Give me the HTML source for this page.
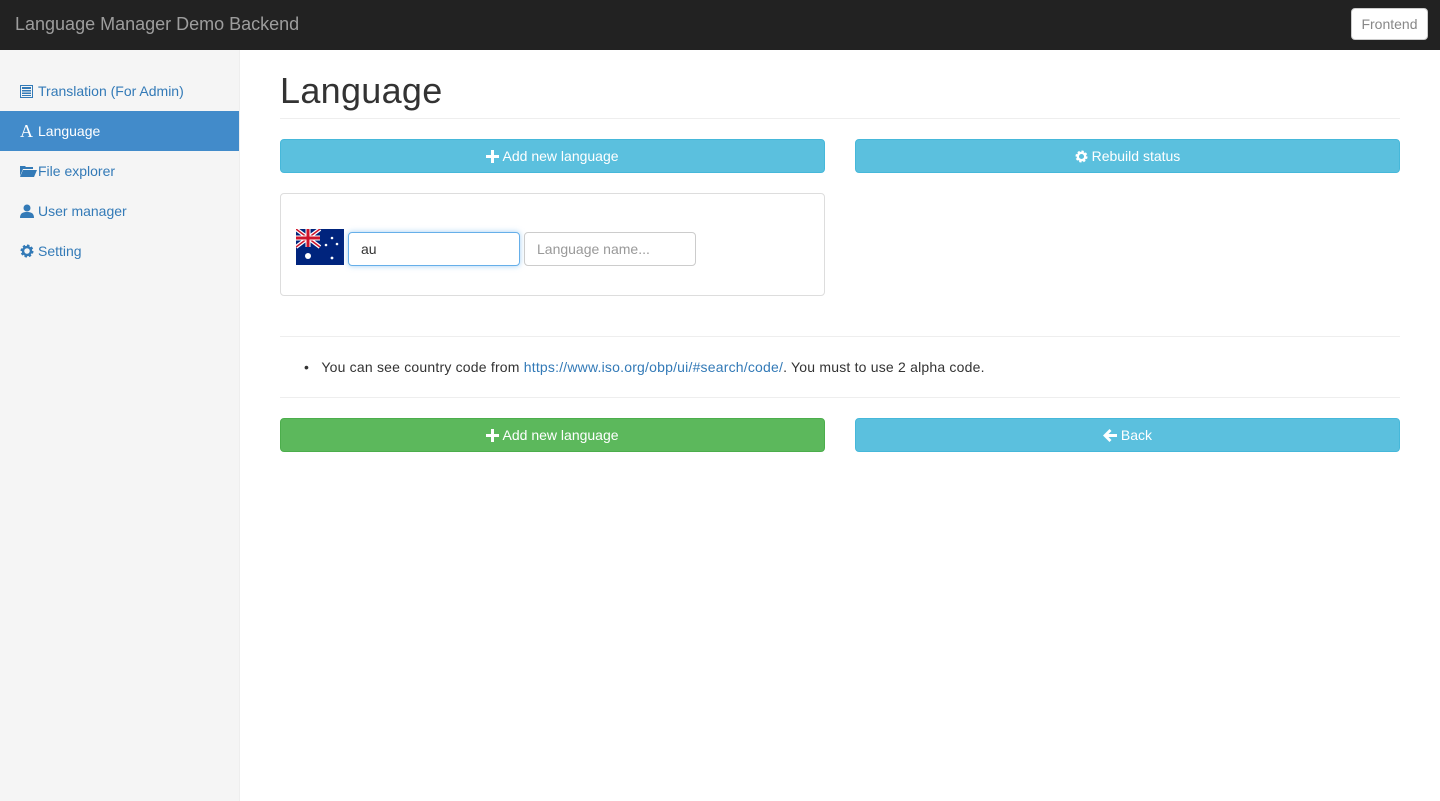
<!DOCTYPE html>
<html><head><style>
*{box-sizing:border-box;margin:0;padding:0}
body{width:1440px;height:801px;font-family:"Liberation Sans",sans-serif;font-size:14px;color:#333;background:#fff;position:relative;overflow:hidden}
.nav{position:absolute;left:0;top:0;width:1440px;height:50px;background:#222;}
.brand{position:absolute;left:15px;top:14px;font-size:18px;color:#9d9d9d}
.fe{position:absolute;right:12px;top:8px;width:77px;height:32px;background:#fff;border:1px solid #ccc;border-radius:4px;color:#888;font-size:14px;text-align:center;line-height:30px}
.side{position:absolute;left:0;top:50px;width:240px;height:751px;background:#f5f5f5;border-right:1px solid #eee}
.si{position:absolute;left:0;width:239px;height:40px;line-height:40px;padding-left:20px;color:#337ab7;font-size:14px}
.si.act{background:#428bca;color:#fff}
.ic{display:inline-block;width:18px;vertical-align:top}
.ic svg{vertical-align:-2px}
h1{position:absolute;left:280px;top:70px;font-size:36px;font-weight:500;color:#333;letter-spacing:0.3px}
.hr{position:absolute;left:280px;width:1120px;height:1px;background:#eee}
.btn{position:absolute;height:34px;border-radius:4px;color:#fff;text-align:center;line-height:33px;font-size:14px;background:#5bc0de;border:1px solid #46b8da}
.btn svg{vertical-align:-2px}
.green{background:#5cb85c;border-color:#4cae4c}
.panel{position:absolute;left:280px;top:193px;width:545px;height:103px;border:1px solid #ddd;border-radius:4px}
.inp{position:absolute;top:232px;height:34px;border:1px solid #ccc;border-radius:4px;padding-left:12px;line-height:32px;font-size:14px}
a{color:#337ab7;text-decoration:none}
</style></head><body>
<div class="nav"><div class="brand">Language Manager Demo Backend</div><div class="fe">Frontend</div></div>
<div class="side">
<div class="si" style="top:21px"><span class="ic"><svg width="13" height="13" viewBox="0 0 13 13"><rect x="0.5" y="0.5" width="12" height="12" fill="none" stroke="#337ab7"/><rect x="2" y="2" width="9" height="2" fill="#337ab7"/><rect x="2" y="5" width="9" height="1.5" fill="#337ab7"/><rect x="2" y="7.5" width="9" height="1.5" fill="#337ab7"/><rect x="2" y="10" width="9" height="1" fill="#337ab7"/></svg></span>Translation (For Admin)</div>
<div class="si act" style="top:61px"><span class="ic" style="font-family:'Liberation Serif',serif;font-size:18px">A</span>Language</div>
<div class="si" style="top:101px"><span class="ic"><svg width="17" height="13" viewBox="0 0 17 13"><path d="M0 1h5l1 1h7v2H3L0 11z" fill="#337ab7"/><path d="M3 5h14l-3 7H0z" fill="#337ab7"/></svg></span>File explorer</div>
<div class="si" style="top:141px"><span class="ic"><svg width="14" height="14" viewBox="0 0 14 14"><circle cx="7" cy="4" r="3.5" fill="#337ab7"/><path d="M0 14c0-5 3-6 7-6s7 1 7 6z" fill="#337ab7"/></svg></span>User manager</div>
<div class="si" style="top:181px"><span class="ic"><svg width="14" height="14" viewBox="0 0 14 14"><circle cx="7" cy="7" r="5" fill="none" stroke="#337ab7" stroke-width="3" stroke-dasharray="2.2 1.7"/><circle cx="7" cy="7" r="4" fill="none" stroke="#337ab7" stroke-width="2.5"/><circle cx="7" cy="7" r="1.3" fill="#f5f5f5"/></svg></span>Setting</div>
</div>
<h1>Language</h1>
<div class="hr" style="top:118px"></div>
<div class="btn" style="left:280px;top:139px;width:545px"><svg width="13" height="13" viewBox="0 0 13 13"><path d="M5 0h3v5h5v3H8v5H5V8H0V5h5z" fill="#fff"/></svg> Add new language</div>
<div class="btn" style="left:855px;top:139px;width:545px"><svg width="13" height="13" viewBox="0 0 14 14"><circle cx="7" cy="7" r="5" fill="none" stroke="#fff" stroke-width="3" stroke-dasharray="2.2 1.7"/><circle cx="7" cy="7" r="4" fill="none" stroke="#fff" stroke-width="2.5"/></svg> Rebuild status</div>
<div class="panel"></div>
<svg style="position:absolute;left:296px;top:229px" width="48" height="36" viewBox="0 0 48 36"><rect width="48" height="36" fill="#00247d"/><path d="M0 0L24 18M24 0L0 18" stroke="#fff" stroke-width="4"/><path d="M0 0L24 18M24 0L0 18" stroke="#cf142b" stroke-width="1.5"/><path d="M12 0v18M0 9h24" stroke="#fff" stroke-width="5"/><path d="M12 0v18M0 9h24" stroke="#cf142b" stroke-width="3"/><circle cx="12" cy="27" r="3" fill="#fff"/><circle cx="36" cy="9" r="1.3" fill="#fff"/><circle cx="30" cy="16" r="1.3" fill="#fff"/><circle cx="41" cy="15" r="1.3" fill="#fff"/><circle cx="36" cy="29" r="1.4" fill="#fff"/></svg>
<div class="inp" style="left:348px;width:172px;border-color:#66afe9;box-shadow:0 0 6px rgba(102,175,233,.6)">au</div>
<div class="inp" style="left:524px;width:172px;color:#999">Language name...</div>
<div class="hr" style="top:336px"></div>
<div style="position:absolute;left:304px;top:359px;letter-spacing:0.2px">• &nbsp;&nbsp;You can see country code from <a>https://www.iso.org/obp/ui/#search/code/</a>. You must to use 2 alpha code.</div>
<div class="hr" style="top:397px"></div>
<div class="btn green" style="left:280px;top:418px;width:545px"><svg width="13" height="13" viewBox="0 0 13 13"><path d="M5 0h3v5h5v3H8v5H5V8H0V5h5z" fill="#fff"/></svg> Add new language</div>
<div class="btn" style="left:855px;top:418px;width:545px"><svg width="14" height="13" viewBox="0 0 14 13"><path d="M6.5 0L8.5 2 5.5 5H14v3H5.5l3 3-2 2L0 6.5z" fill="#fff"/></svg> Back</div>
</body></html>
